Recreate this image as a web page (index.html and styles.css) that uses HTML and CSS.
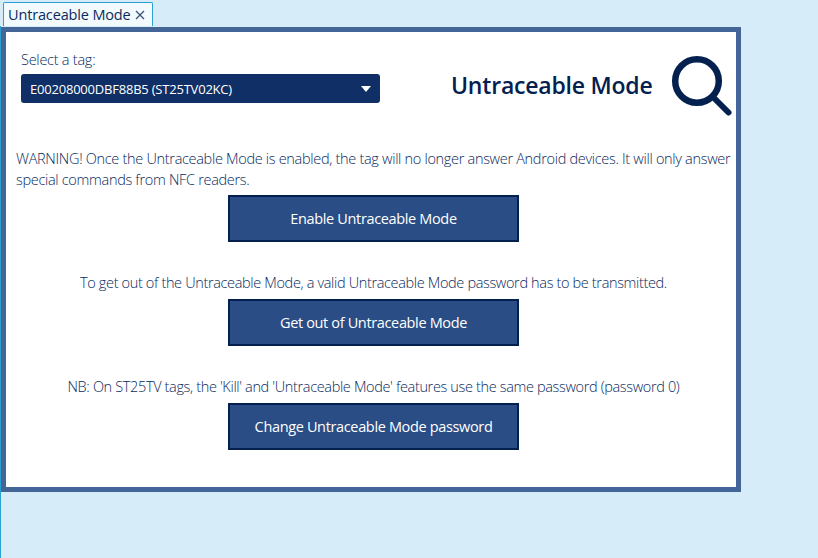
FILE: index.html
```html
<!DOCTYPE html>
<html lang="en">
<head>
    <meta charset="UTF-8">
    <meta name="viewport" content="width=device-width, initial-scale=1.0">
    <title>Untraceable Mode</title>
    <link rel="stylesheet" href="styles.css">
</head>
<body>
    <div class="tab-bar">
        <div class="tab">
            <span class="tab-title">Untraceable Mode</span>
            <svg class="tab-close" viewBox="0 0 10 10" width="10" height="10">
                <path d="M1 1L9 9M9 1L1 9" stroke="#3a5578" stroke-width="1.3" fill="none"/>
            </svg>
        </div>
    </div>
    <div class="tab-content">
        <div class="panel">
            <div class="panel-header">
                <div class="tag-picker">
                    <div class="tag-label">Select a tag:</div>
                    <div class="tag-select">
                        <span>E00208000DBF88B5 (ST25TV02KC)</span>
                        <span class="tag-arrow"></span>
                    </div>
                </div>
                <h1 class="panel-title">Untraceable Mode</h1>
                <svg class="panel-icon" viewBox="0 0 62 62" width="62" height="62">
                    <circle cx="26" cy="26" r="21.8" stroke="#04204f" stroke-width="6.5" fill="none"/>
                    <path d="M43 43L57.5 57.5" stroke="#04204f" stroke-width="6" stroke-linecap="round" fill="none"/>
                </svg>
            </div>
            <p class="warning">WARNING! Once the Untraceable Mode is enabled, the tag will no longer answer Android devices. It will only answer special commands from NFC readers.</p>
            <button class="action-button">Enable Untraceable Mode</button>
            <p class="note">To get out of the Untraceable Mode, a valid Untraceable Mode password has to be transmitted.</p>
            <button class="action-button">Get out of Untraceable Mode</button>
            <p class="note">NB: On ST25TV tags, the 'Kill' and 'Untraceable Mode' features use the same password (password 0)</p>
            <button class="action-button">Change Untraceable Mode password</button>
        </div>
    </div>
</body>
</html>
```

FILE: styles.css
```css
html, body {
    height: 100%;
}

body {
    font-family: "Open Sans", "Noto Sans", sans-serif;
    font-size: 14.5px;
    font-weight: 300;
    margin: 0;
    background-color: #d6ecf8;
    color: #0a2a5c;
    overflow: hidden;
    display: flex;
    flex-direction: column;
}

.tab-bar {
    height: 26px;
    padding: 2px 0 0 3px;
    box-sizing: border-box;
    display: flex;
}

.tab {
    width: 150px;
    box-sizing: border-box;
    background-color: #f3fafd;
    border: 1px solid #2aa0d0;
    border-bottom: none;
    border-radius: 2px 2px 0 0;
    padding-left: 4px;
    display: flex;
    align-items: center;
    gap: 4px;
}

.tab-title {
    font-size: 14.5px;
    font-weight: 400;
    letter-spacing: -0.15px;
    white-space: nowrap;
}

.tab-close {
    flex: none;
}

.tab-content {
    flex: 1;
    border-left: 1px solid #2aa0d0;
    padding-top: 1px;
}

.panel {
    width: 740px;
    height: 465px;
    box-sizing: border-box;
    background: white;
    border: 5px solid #436598;
    padding: 0 5px 0 10px;
    display: flex;
    flex-direction: column;
    align-items: center;
}

.panel-header {
    align-self: stretch;
    height: 90px;
    margin-top: 18px;
    margin-bottom: 8px;
    padding-left: 5px;
    display: flex;
    align-items: flex-start;
}

.tag-picker {
    width: 359px;
    flex: none;
}

.tag-label {
    height: 24px;
    line-height: 19px;
    letter-spacing: -0.25px;
}

.tag-select {
    height: 29px;
    box-sizing: border-box;
    background-color: #0f2f66;
    border-radius: 3px;
    color: white;
    font-size: 13px;
    font-weight: 400;
    letter-spacing: -0.21px;
    padding: 0 9px;
    display: flex;
    align-items: center;
    justify-content: space-between;
}

.tag-arrow {
    border-left: 5px solid transparent;
    border-right: 5px solid transparent;
    border-top: 6px solid white;
}

.panel-title {
    font-size: 23px;
    font-weight: 600;
    letter-spacing: -0.21px;
    color: #04204f;
    margin: 19px 0 0 71px;
    line-height: 33px;
    white-space: nowrap;
}

.panel-icon {
    flex: none;
    margin: 5px 0 0 19px;
}

.warning {
    align-self: stretch;
    margin: 0 0 5px;
    line-height: 21px;
    letter-spacing: -0.31px;
}

.note {
    margin: 30px 0 6px;
    line-height: 21px;
    letter-spacing: -0.35px;
    white-space: nowrap;
}

.action-button {
    width: 291px;
    height: 47px;
    flex: none;
    background-color: #2a4d85;
    border: 2px solid #04204f;
    color: white;
    font-family: inherit;
    font-size: 14.5px;
    font-weight: 400;
    letter-spacing: -0.35px;
}
```
